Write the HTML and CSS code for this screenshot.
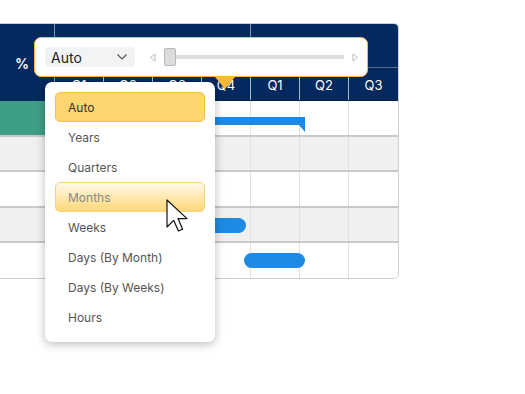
FILE: index.html
```html
<!DOCTYPE html>
<html>
<head>
  <title>Gantt Zoom</title>
  <link rel="stylesheet" href="styles.css">
</head>
<body>
  <div class="gantt">
    <div class="header">
      <div class="hdr-left">%</div>
      <div class="hdr-time">
        <div class="years">
          <div class="year y1"></div>
          <div class="year y2"></div>
        </div>
        <div class="quarters">
          <div class="q">Q1</div>
          <div class="q">Q2</div>
          <div class="q">Q3</div>
          <div class="q">Q4</div>
          <div class="q">Q1</div>
          <div class="q">Q2</div>
          <div class="q">Q3</div>
        </div>
      </div>
    </div>

    <div class="row tall">
      <div class="cell-left teal"></div>
      <div class="cells"><i></i><i></i><i></i><i></i><i></i><i></i><i></i></div>
      <div class="bar summary"></div>
    </div>
    <div class="row alt">
      <div class="cell-left"></div>
      <div class="cells"><i></i><i></i><i></i><i></i><i></i><i></i><i></i></div>
    </div>
    <div class="row tall">
      <div class="cell-left"></div>
      <div class="cells"><i></i><i></i><i></i><i></i><i></i><i></i><i></i></div>
    </div>
    <div class="row alt">
      <div class="cell-left"></div>
      <div class="cells"><i></i><i></i><i></i><i></i><i></i><i></i><i></i></div>
      <div class="bar task1"></div>
    </div>
    <div class="row">
      <div class="cell-left"></div>
      <div class="cells"><i></i><i></i><i></i><i></i><i></i><i></i><i></i></div>
      <div class="bar task2"></div>
    </div>
  </div>

  <!-- zoom toolbar -->
  <div class="zoombar">
    <div class="select">
      <span>Auto</span>
      <svg width="12" height="8" viewBox="0 0 12 8"><path d="M1.5 1.5 L6 6 L10.5 1.5" fill="none" stroke="#555" stroke-width="1.2"/></svg>
    </div>
    <div class="slider">
      <svg width="7" height="9" viewBox="0 0 7 9"><path d="M6 1 L1.5 4.5 L6 8 Z" fill="none" stroke="#bbb" stroke-width="1"/></svg>
      <div class="track">
        <div class="thumb"></div>
        <div class="line"></div>
      </div>
      <svg width="7" height="9" viewBox="0 0 7 9"><path d="M1 1 L5.5 4.5 L1 8 Z" fill="none" stroke="#bbb" stroke-width="1"/></svg>
    </div>
  </div>
  <div class="pointer"></div>

  <!-- zoom level menu -->
  <div class="menu">
    <div class="item selected">Auto</div>
    <div class="item">Years</div>
    <div class="item">Quarters</div>
    <div class="item hover">Months</div>
    <div class="item">Weeks</div>
    <div class="item">Days (By Month)</div>
    <div class="item">Days (By Weeks)</div>
    <div class="item">Hours</div>
  </div>

  <svg class="cursor" width="23" height="35" viewBox="0 0 23 35">
    <path d="M1 1 L1 28 L7.7 21.3 L12.4 32 L16.6 30.2 L12 19.6 L21 19.6 Z" fill="#fff" stroke="#111" stroke-width="1.2" stroke-linejoin="round"/>
  </svg>
</body>
</html>
```

FILE: styles.css
```css
body {
  margin: 0;
  background-color: white;
  font-family: Inter, "Noto Sans", sans-serif;
  position: relative;
  width: 525px;
  height: 394px;
  overflow: hidden;
}

.gantt {
  margin-top: 23px;
  width: 398px;
  border: 1px solid #cfcfcf;
  border-left: none;
  border-radius: 0 5px 5px 0;
  overflow: hidden;
}

.header {
  display: flex;
  background-color: #03295e;
  color: white;
  height: 77px;
}

.hdr-left {
  width: 55px;
  border-right: 1px solid #8390a8;
  box-sizing: border-box;
  display: flex;
  align-items: center;
  padding-left: 15px;
  padding-top: 2px;
  font-size: 14px;
  font-weight: 600;
}

.hdr-time {
  flex: 1;
  display: flex;
  flex-direction: column;
}

.years {
  display: flex;
  height: 43px;
  border-bottom: 1px solid #5a6a88;
}

.year {
  border-right: 1px solid #8390a8;
  box-sizing: border-box;
}

.y1 { width: 196px; }
.y2 { flex: 1; border-right: none; }

.quarters {
  display: flex;
  flex: 1;
  border-bottom: 1px solid #0d1f3d;
}

.q {
  width: 49px;
  border-right: 1px solid #aeb6c4;
  box-sizing: border-box;
  display: flex;
  align-items: center;
  justify-content: center;
  padding-top: 2px;
  font-size: 13px;
}

.q:last-child {
  border-right: none;
  flex: 1;
}

.row {
  display: flex;
  position: relative;
  height: 35px;
  border-bottom: 2px solid #c9c9c9;
  box-sizing: border-box;
  background-color: white;
}

.row.tall {
  height: 36px;
}

.row:last-child {
  border-bottom: none;
}

.row.alt {
  background-color: #f0f0f0;
}

.cell-left {
  width: 55px;
}

.cell-left.teal {
  background-color: #3f9e86;
}

.cells {
  display: flex;
  flex: 1;
}

.cells i {
  width: 49px;
  border-right: 1px solid #e2e2e2;
  box-sizing: border-box;
}

.cells i:last-child {
  border-right: none;
  flex: 1;
}

.bar {
  position: absolute;
  background-color: #1e8ae3;
}

.bar.summary {
  left: 70px;
  width: 235px;
  top: 16px;
  height: 8px;
}

.bar.summary::after {
  content: "";
  position: absolute;
  right: 0;
  top: 8px;
  border-top: 7px solid #1e8ae3;
  border-left: 6px solid transparent;
}

.bar.task1 {
  left: 120px;
  width: 126px;
  top: 10px;
  height: 15px;
  border-radius: 8px;
}

.bar.task2 {
  left: 244px;
  width: 61px;
  top: 10px;
  height: 15px;
  border-radius: 8px;
}

.zoombar {
  position: absolute;
  left: 34px;
  top: 37px;
  width: 334px;
  height: 40px;
  box-sizing: border-box;
  background-color: white;
  border: 1.5px solid #f6b93b;
  border-radius: 7px;
  display: flex;
  align-items: center;
  padding-left: 10px;
  gap: 14px;
}

.select {
  width: 90px;
  height: 20px;
  background-color: #f2f3f5;
  border-radius: 4px;
  display: flex;
  align-items: center;
  justify-content: space-between;
  padding: 0 7px 0 6px;
  box-sizing: border-box;
  font-size: 14px;
  color: #222;
}

.slider {
  display: flex;
  align-items: center;
  gap: 8px;
}

.track {
  display: flex;
  align-items: center;
  width: 180px;
}

.thumb {
  width: 12px;
  height: 18px;
  background-color: #dcdcdc;
  border: 1px solid #b9b9b9;
  border-radius: 2px;
  box-sizing: border-box;
}

.line {
  flex: 1;
  height: 4px;
  background-color: #dedede;
}

.pointer {
  position: absolute;
  left: 215px;
  top: 77px;
  border-top: 12px solid #f6b93b;
  border-left: 10px solid transparent;
  border-right: 10px solid transparent;
}

.menu {
  position: absolute;
  left: 45px;
  top: 82px;
  width: 170px;
  padding: 10px;
  box-sizing: border-box;
  background-color: white;
  border-radius: 7px;
  box-shadow: 0 2px 10px rgba(0, 0, 0, 0.28);
}

.item {
  height: 30px;
  display: flex;
  align-items: center;
  padding-left: 12px;
  font-size: 12px;
  color: #555;
  border: 1px solid transparent;
  border-radius: 5px;
  box-sizing: border-box;
}

.item.selected {
  background-color: #fdd66f;
  border-color: #f5c14c;
  color: #333;
}

.item.hover {
  background: linear-gradient(#fff9ea, #fdd877);
  border-color: #f8d27a;
  color: #888;
}

.cursor {
  position: absolute;
  left: 166px;
  top: 199px;
}
```
